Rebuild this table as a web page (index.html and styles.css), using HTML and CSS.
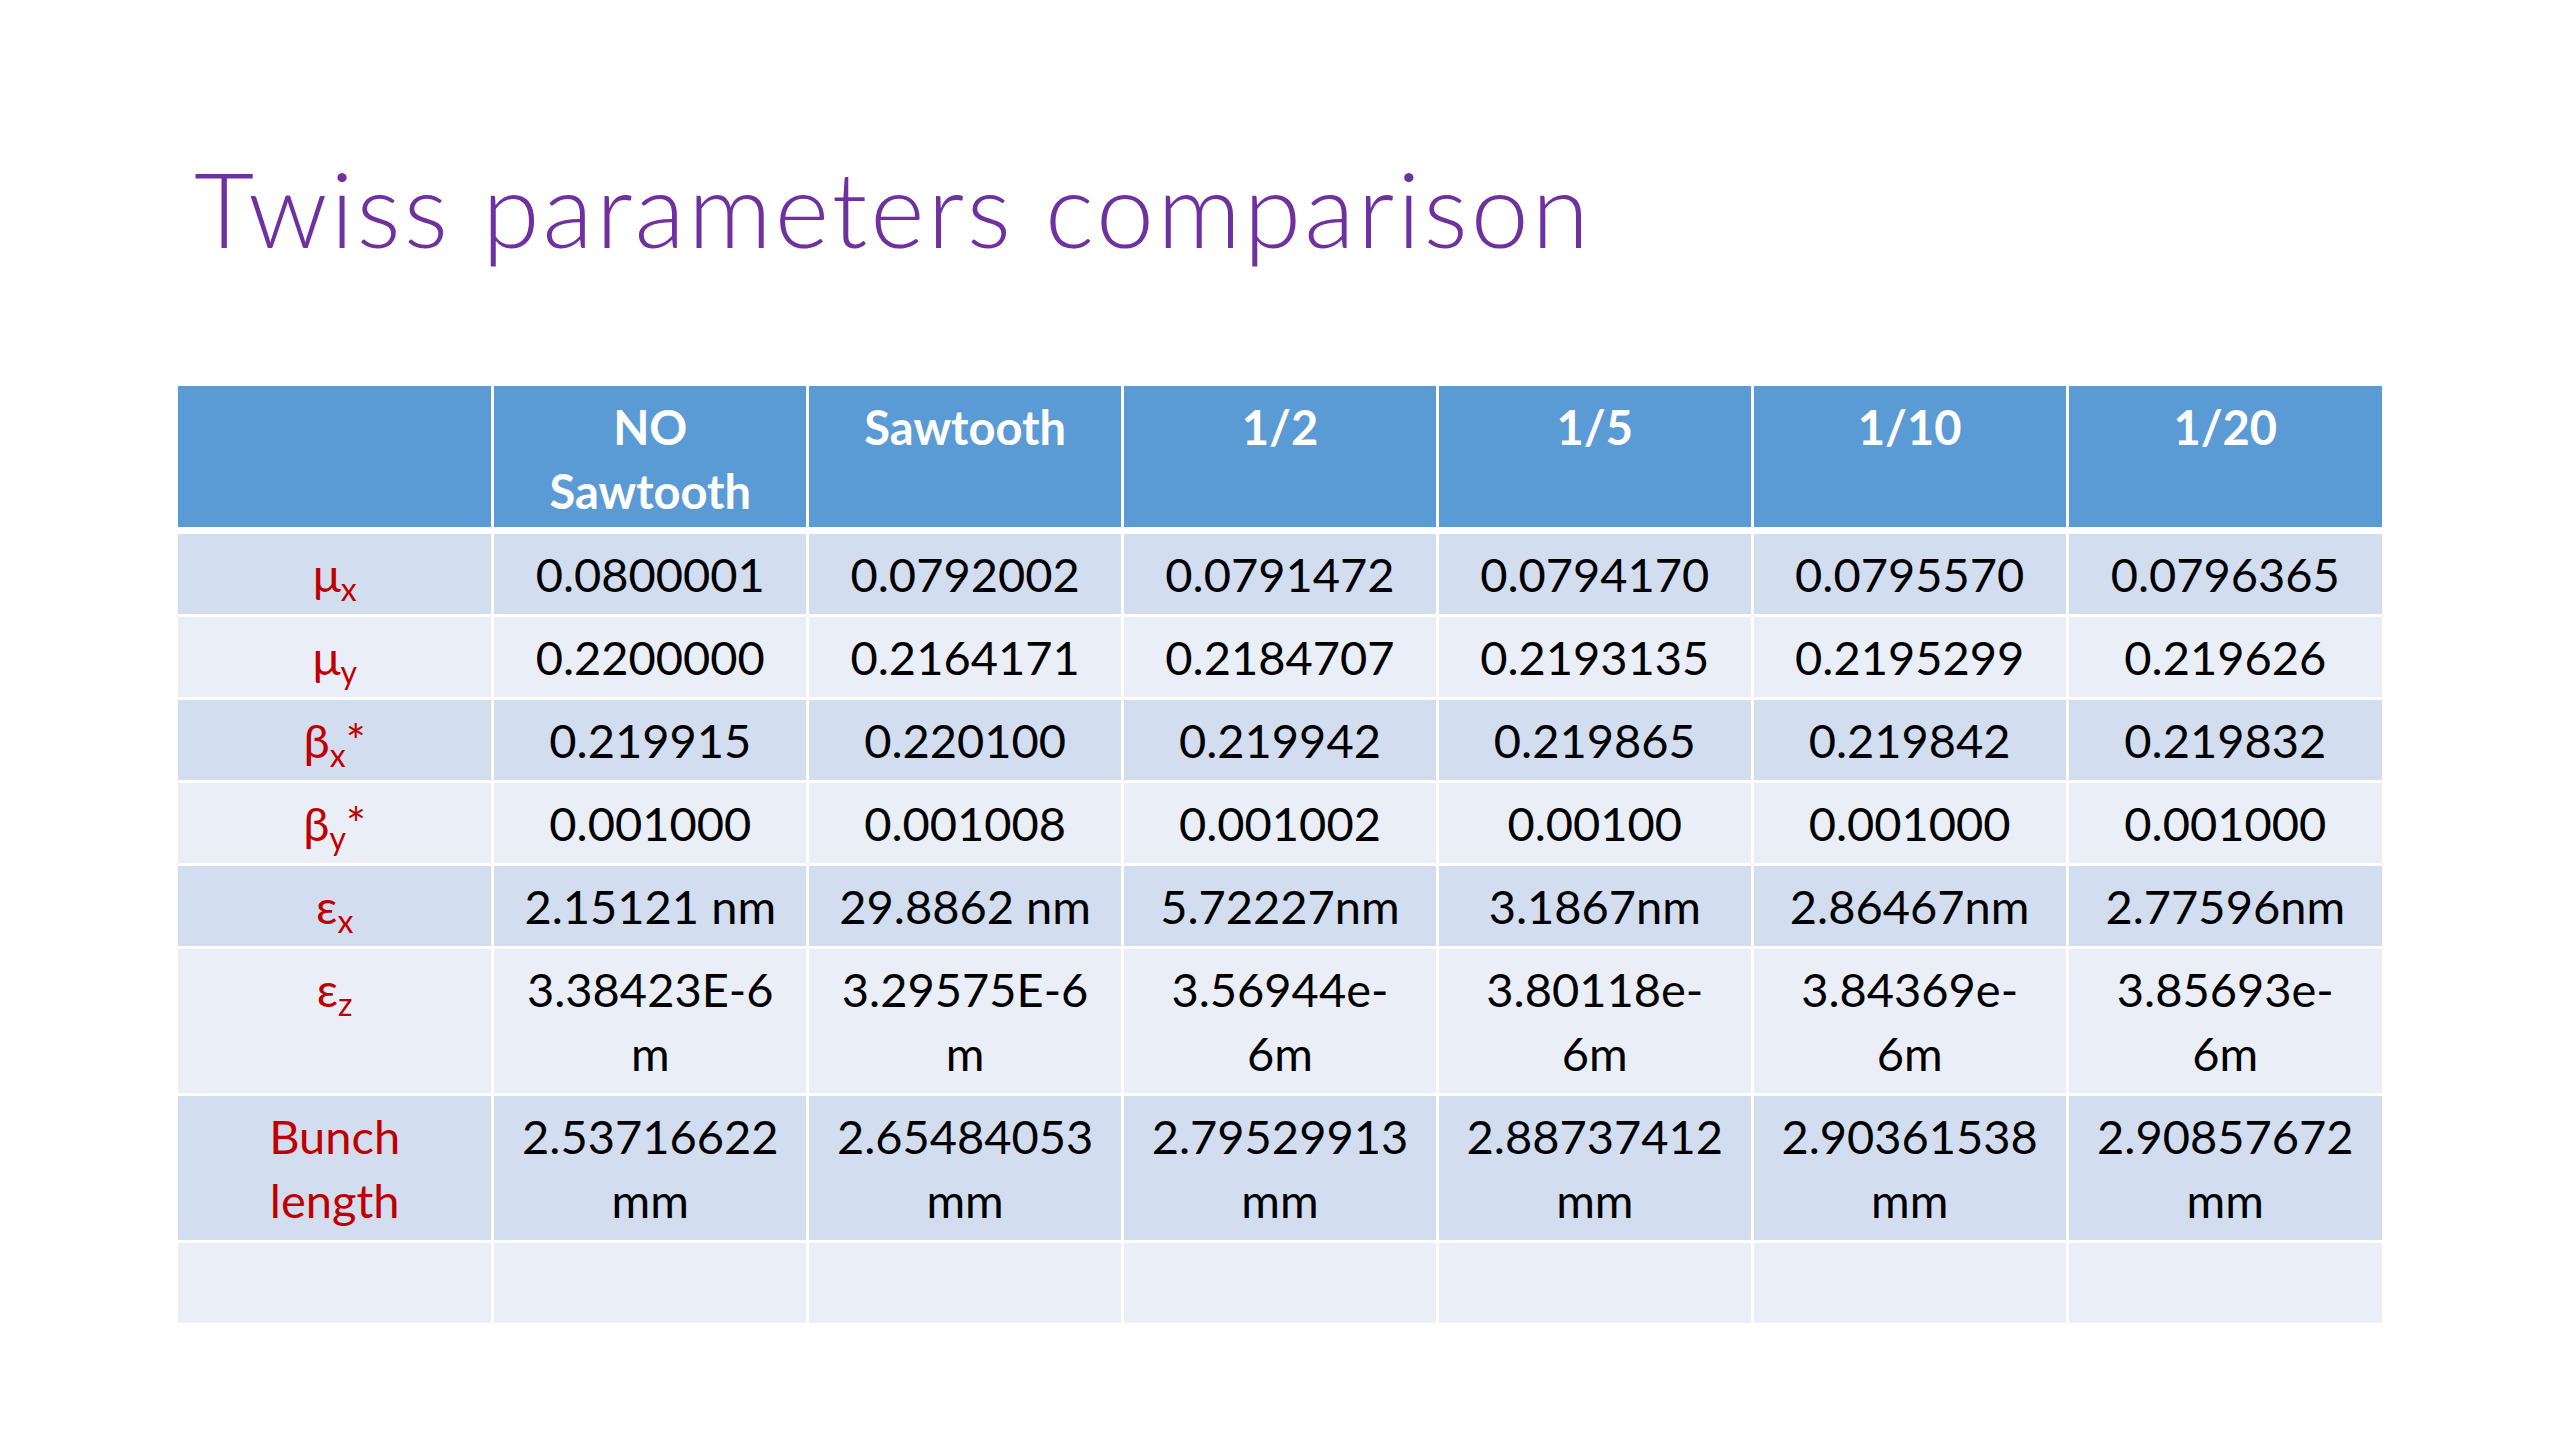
FILE: index.html
```html
<!DOCTYPE html>
<html lang="en">
<head>
    <meta charset="UTF-8">
    <meta name="viewport" content="width=device-width, initial-scale=1.0">
    <title>Twiss parameters comparison</title>
    <link rel="stylesheet" href="styles.css">
</head>
<body>
    <div class="slide">
        <h1 class="title">Twiss parameters comparison</h1>

        <table class="twiss">
            <thead>
                <tr>
                    <th></th>
                    <th>NO Sawtooth</th>
                    <th>Sawtooth</th>
                    <th>1/2</th>
                    <th>1/5</th>
                    <th>1/10</th>
                    <th>1/20</th>
                </tr>
            </thead>
            <tbody>
                <tr>
                    <td class="label">&mu;<sub>x</sub></td>
                    <td>0.0800001</td>
                    <td>0.0792002</td>
                    <td>0.0791472</td>
                    <td>0.0794170</td>
                    <td>0.0795570</td>
                    <td>0.0796365</td>
                </tr>
                <tr>
                    <td class="label">&mu;<sub>y</sub></td>
                    <td>0.2200000</td>
                    <td>0.2164171</td>
                    <td>0.2184707</td>
                    <td>0.2193135</td>
                    <td>0.2195299</td>
                    <td>0.219626</td>
                </tr>
                <tr>
                    <td class="label">&beta;<sub>x</sub>*</td>
                    <td>0.219915</td>
                    <td>0.220100</td>
                    <td>0.219942</td>
                    <td>0.219865</td>
                    <td>0.219842</td>
                    <td>0.219832</td>
                </tr>
                <tr>
                    <td class="label">&beta;<sub>y</sub>*</td>
                    <td>0.001000</td>
                    <td>0.001008</td>
                    <td>0.001002</td>
                    <td>0.00100</td>
                    <td>0.001000</td>
                    <td>0.001000</td>
                </tr>
                <tr>
                    <td class="label">&epsilon;<sub>x</sub></td>
                    <td>2.15121 nm</td>
                    <td>29.8862 nm</td>
                    <td>5.72227nm</td>
                    <td>3.1867nm</td>
                    <td>2.86467nm</td>
                    <td>2.77596nm</td>
                </tr>
                <tr>
                    <td class="label">&epsilon;<sub>z</sub></td>
                    <td>3.38423E-6 m</td>
                    <td>3.29575E-6 m</td>
                    <td>3.56944e-<wbr>6m</td>
                    <td>3.80118e-<wbr>6m</td>
                    <td>3.84369e-<wbr>6m</td>
                    <td>3.85693e-<wbr>6m</td>
                </tr>
                <tr>
                    <td class="label">Bunch length</td>
                    <td>2.53716622 mm</td>
                    <td>2.65484053 mm</td>
                    <td>2.79529913 mm</td>
                    <td>2.88737412 mm</td>
                    <td>2.90361538 mm</td>
                    <td>2.90857672 mm</td>
                </tr>
                <tr>
                    <td class="label">&nbsp;</td>
                    <td></td>
                    <td></td>
                    <td></td>
                    <td></td>
                    <td></td>
                    <td></td>
                </tr>
            </tbody>
        </table>
    </div>
</body>
</html>
```

FILE: styles.css
```css
body {
    background-color: #ffffff;
    margin: 0;
    font-family: Lato, "Open Sans", "Liberation Sans", sans-serif;
}
.slide {
    width: 2560px;
    height: 1440px;
    padding: 156px 0 0 178px;
    box-sizing: border-box;
}
.title {
    margin: 0 0 126px 16px;
    font-size: 104px;
    line-height: 1;
    font-weight: 300;
    letter-spacing: 3px;
    color: #7030a0;
}
.twiss {
    width: 2204px;
    table-layout: fixed;
    border-collapse: collapse;
    border-style: hidden;
    font-size: 47px;
    line-height: 64px;
    color: #000000;
}
.twiss th, .twiss td {
    border: 3px solid #ffffff;
    padding: 8px 24px 8px;
    text-align: center;
    vertical-align: top;
}
.twiss th {
    background-color: #5b9bd5;
    color: #ffffff;
    font-weight: 700;
    padding-top: 9px;
    padding-bottom: 4px;
    border-bottom: 7px solid #ffffff;
}
.twiss tbody tr:nth-child(odd) td {
    background-color: #d2deef;
}
.twiss tbody tr:nth-child(even) td {
    background-color: #eaeff7;
}
.twiss .label {
    color: #c00000;
}
.twiss sub {
    font-size: 0.68em;
    line-height: 0;
    vertical-align: -0.28em;
}
```
